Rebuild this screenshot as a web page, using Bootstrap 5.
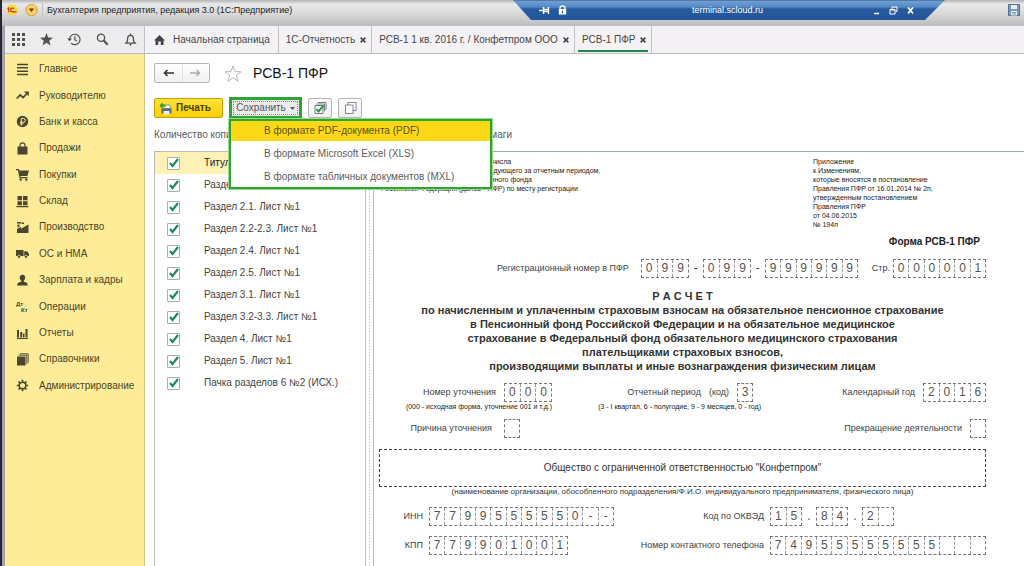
<!DOCTYPE html>
<html lang="ru">
<head>
<meta charset="utf-8">
<meta name="viewport" content="width=device-width, initial-scale=1">
<title>Бухгалтерия предприятия, редакция 3.0</title>
<link rel="stylesheet" href="https://cdn.jsdelivr.net/npm/bootstrap@5.3.0/dist/css/bootstrap.min.css">
<style>
  :root { --ink:#3f3f3f; --line:#b9bcc0; --green:#2fa52f; --gold:#fdd817; }
  body { font:10px/14px "Liberation Sans", Arial, sans-serif; color:var(--ink); background:#fff; }
  svg { display:block; flex:none; }
  button { font:inherit; color:inherit; }
  .app-frame { min-height:100vh; border-left:2px solid #2b2433; }
  .app-body { border-left:3px solid #a5a5a9; }

  /* window caption */
  .caption-bar { height:26px; padding:0 4px 6px 4px; background:linear-gradient(#b4b4b6 0,#e9e9ea 4px,#dcdcdd 12px,#bcbcbe 100%); color:#222; }
  .caption-title { font-size:9px; }
  .round-ico { width:12px; height:12px; overflow:visible; }
  .caption-sep { width:1px; height:16px; background:#c4c4c6; }
  .remote-bar { left:50%; right:79px; top:0; height:20px; padding:0 26px; color:#fff; font-size:9px;
    background:linear-gradient(#3c4f72 0,#6f9fd4 1px,#5688c4 7px,#275a9f 9px,#24559a 100%);
    clip-path:polygon(0 0,100% 0,calc(100% - 20px) 100%,18px 100%); }
  .remote-bar button { border:0; padding:0; background:none; color:#fff; }

  /* open pages */
  .tabs-bar { height:28px; background:#f5f2f6; border-bottom:1px solid #bdbdc0; }
  .quick-tools { width:140px; background:#ececee; border-right:1px solid #c2c2c6; }
  .quick-tools button { width:28px; border:0; padding:0; background:none; color:#505050; }
  .page-tab { padding:0 5px 0 7px; gap:5px; border-right:1px solid #c2c2c6; color:#464646; text-decoration:none; white-space:nowrap; position:relative; }
  .page-tab.home { padding:0 8px 0 9px; gap:8px; }
  .page-tab.current::after { content:""; position:absolute; left:3px; right:3px; bottom:1px; height:2px; background:#1d8752; }
  .page-tab button { border:0; padding:0; background:none; }

  /* sections */
  .sections { width:140px; padding-top:2px; background:#feec98; border-right:1px solid #cfc489; }
  .sections ul { display:grid; grid-auto-rows:1fr; height:343px; }
  .sections a { display:flex; align-items:center; gap:10px; height:100%; padding-left:11px; color:#4a4427; text-decoration:none; }
  .sections svg { width:13px; height:13px; color:#4a4630; }

  /* working area */
  .work { padding:9px 0 0 9px; min-width:0; }
  .flat-btn { height:20px; border:1px solid #b5b5b5; border-radius:2px; background:linear-gradient(#fff,#efefef); padding:0; }
  .nav-pair { width:56px; }
  .star { margin:0 11px 0 14px; }
  .page-title { font-size:14px; line-height:20px; color:#111; }
  .print-btn { width:69px; border-color:#c3a100; background:linear-gradient(#ffe23c,#f8cf00); color:#4c4200; }
  .commands { margin-top:15px; gap:6px; }
  .save-btn { width:73px; height:22px; margin:-1px 0; border:3px solid var(--green); border-radius:0; background:#ebebeb; outline:1px dotted #888; outline-offset:-5px; color:#555; }
  .tool-btn { width:24px; }
  .save-menu { left:0; top:21px; width:263px; padding:0; margin:0; border:2px solid var(--green); border-radius:0; font-size:10px; box-shadow:0 0 0 1px #9bdc94; }
  .save-menu ul { display:grid; gap:3px; }
  .save-menu .dropdown-item { padding:0 0 0 33px; height:20px; line-height:20px; color:#5c5c5c; }
  .save-menu .dropdown-item.active { background:var(--gold); color:#5c4f10; }
  .copies-line { margin:10px 0 9px; width:358px; color:#5a5a5a; }
  .parts { width:212px; border:1px solid var(--line); border-bottom:0; }
  .parts label { display:flex; align-items:center; gap:24px; height:22px; padding-left:12px; color:#444; }
  .parts label.chosen { background:#fdf1b5; color:#222; }
  .parts input { appearance:none; width:13px; height:13px; margin:0; border:1px solid #a9aeb0; border-radius:1px;
    background:#fff url("data:image/svg+xml,%3Csvg xmlns='http://www.w3.org/2000/svg' viewBox='0 0 11 11'%3E%3Cpath d='M2 5L4.500 8L10 1' fill='none' stroke='%231b8a5a' stroke-width='2.200'/%3E%3C/svg%3E") center/11px no-repeat; }
  .splitter { width:7px; background:repeating-linear-gradient(#b5b5b5 0 1px,transparent 1px 3px) center/1px 100% no-repeat; }

  /* printed form */
  .sheet { min-width:0; padding:5px 38px 8px 5px; border-left:1px solid var(--line); border-top:1px solid #9aa; }
  .fine { font-size:7px; line-height:9px; color:#222; white-space:nowrap; }
  .filing { padding-left:2px; }
  .annex { width:173px; }
  .form-name { font-weight:700; line-height:14px; color:#222; margin-top:6px; padding-right:6px; }
  .reg-line { margin-top:10px; }
  .form-lines { font-size:9px; line-height:19px; white-space:nowrap; }
  .page-label { margin:0 3px 0 14px; }
  .form-head { margin:11px 0 10px; font-size:11px; line-height:14px; font-weight:700; color:#333; text-align:center; }
  .cells { display:flex; flex:none; height:19px; border:1px dashed #777; font-size:12px; line-height:17px; color:#555; }
  .cells span { flex:1 1 0; text-align:center; }
  .cells span + span { border-left:1px dashed #999; }
  .n1 { width:16px; } .n2 { width:32px; } .n3 { width:48px; } .n4 { width:63px; }
  .n6 { width:93px; } .n9 { width:139px; } .n12 { width:185px; } .n14 { width:216px; }
  .dash { width:14px; text-align:center; font-size:12px; }
  .period-grid { display:grid; grid-template-columns:173fr 209fr 225fr; row-gap:8px; }
  .org-box { height:38px; margin-top:11px; border:1px dashed #444; color:#333; }
  .org-note { font-size:8px; line-height:10px; white-space:nowrap; color:#333; }
  .codes-grid { display:grid; grid-template-columns:44px 185px 1fr 216px; gap:10px 6px; margin-top:10px; }
</style>
<script src="https://cdn.jsdelivr.net/npm/bootstrap@5.3.0/dist/js/bootstrap.bundle.min.js"></script>
</head>
<body>
<div class="app-frame d-flex flex-column">
  <header class="caption-bar d-flex align-items-center position-relative">
    <svg class="round-ico" viewBox="0 0 12 12"><circle cx="6" cy="6" r="5.8" fill="#fbd84b"/><path d="M1.600 4.800l1.200-.9v4.300M8.200 4.600C6.600 3.300 4.600 4.300 4.600 5.900S6 8 7 7.900h3.600" fill="none" stroke="#c8321c" stroke-width="1.200"/></svg>
    <svg class="round-ico ms-2" viewBox="0 0 12 12"><circle cx="5.500" cy="6" r="5.600" fill="#fbd06c" stroke="#d99a34"/><path d="M2.800 4.600h5.400L5.500 8z" fill="#6a3c10"/></svg>
    <span class="caption-sep ms-1"></span>
    <span class="caption-title ms-1">Бухгалтерия предприятия, редакция 3.0 (1С:Предприятие)</span>
    <div class="remote-bar position-absolute d-flex align-items-center">
      <button aria-label="Закрепить"><svg width="11" height="9" viewBox="0 0 11 9" fill="none" stroke="#fff" stroke-width="1.400"><path d="M0 4.500h4M4.500 1v7M9.500 1v7M4.500 3.500h5M4.500 5.500h5"/></svg></button>
      <svg class="ms-2" width="9" height="10" viewBox="0 0 9 10"><path d="M2 4.500V3a2.500 2.200 0 0 1 5 0v1.500" fill="none" stroke="#fff" stroke-width="1.300"/><path d="M.8 4h7.400v5.600H.8z" fill="#fff"/><path d="M4.500 5.500v2.500" stroke="#2a5ca0" stroke-width="1.200"/></svg>
      <span class="mx-auto ps-5">terminal.scloud.ru</span>
      <span class="d-flex gap-2 ms-3 ps-3 pe-1">
        <button aria-label="Свернуть"><svg width="9" height="9" viewBox="0 0 9 9"><path d="M2 7.500h5" stroke="#fff" stroke-width="1.600"/></svg></button>
        <button aria-label="Восстановить"><svg width="9" height="9" viewBox="0 0 9 9" fill="none" stroke="#fff"><path d="M3 3V1h5v4.500H6.500M1 3.500h5V8H1zM1 4h5"/></svg></button>
        <button aria-label="Закрыть"><svg width="9" height="9" viewBox="0 0 9 9"><path d="M2 1.500l5 6M7 1.500l-5 6" stroke="#fff" stroke-width="1.700"/></svg></button>
      </span>
    </div>
    <svg class="ms-auto" width="12" height="12" viewBox="0 0 12 12"><path d="M.5.500h11v11h-11z" fill="#7d97b5" stroke="#56708f"/><path d="M3 1h6v4H3zM3 7h6v4.500H3z" fill="#e6edf4"/><path d="M4 8.500h4M4 10h4" stroke="#56708f" stroke-width=".7"/></svg>
  </header>

  <div class="app-body flex-grow-1 d-flex flex-column">
    <nav class="tabs-bar d-flex">
      <div class="quick-tools d-flex flex-shrink-0">
        <button class="d-flex align-items-center justify-content-center" aria-label="Меню"><svg width="13" height="13" viewBox="0 0 13 13" fill="currentColor"><path d="M0 0h3v3H0zM5 0h3v3H5zM10 0h3v3h-3zM0 5h3v3H0zM5 5h3v3H5zM10 5h3v3h-3zM0 10h3v3H0zM5 10h3v3H5zM10 10h3v3h-3z"/></svg></button>
        <button class="d-flex align-items-center justify-content-center" aria-label="Избранное"><svg width="13" height="13" viewBox="0 0 13 13" fill="currentColor"><path d="M6.500 0l1.700 4.500 4.800.2-3.800 3 1.300 4.700-4-2.700-4 2.700 1.300-4.700L0 4.700l4.800-.2z"/></svg></button>
        <button class="d-flex align-items-center justify-content-center" aria-label="История"><svg width="14" height="13" viewBox="0 0 14 13" fill="none" stroke="currentColor" stroke-width="1.200"><path d="M2.600 6.500a5.200 5.200 0 1 1 1.600 3.700M7.800 3.300v3.400l2.200 1.300"/><path d="M.2 5.500h4.800L2.600 8.300z" fill="currentColor" stroke="none"/></svg></button>
        <button class="d-flex align-items-center justify-content-center" aria-label="Поиск"><svg width="13" height="13" viewBox="0 0 13 13" fill="none" stroke="currentColor"><circle cx="5" cy="4.800" r="3.600" stroke-width="1.300"/><path d="M7.700 7.500l4 4.200" stroke-width="2.200"/></svg></button>
        <button class="d-flex align-items-center justify-content-center" aria-label="Оповещения"><svg width="13" height="13" viewBox="0 0 13 13" fill="none" stroke="currentColor" stroke-width="1.300"><path d="M.8 10.200h11.400M2.300 10c1.400-1.300 1.200-3 1.400-5 .2-3.600 5.400-3.600 5.600 0 .2 2 0 3.700 1.400 5M6.500 2.400V.4"/><path d="M5 11h3l-1.500 1.700z" fill="currentColor" stroke="none"/></svg></button>
      </div>
      <a class="page-tab home d-flex align-items-center" href="#"><svg width="11" height="10" viewBox="0 0 11 10" fill="#444"><path d="M5.500 0L11 5.400H9.500V10H6.800V6.500H4.200V10H1.500V5.400H0z"/></svg>Начальная страница</a>
      <div class="page-tab d-flex align-items-center">1С-Отчетность<button aria-label="Закрыть вкладку"><svg width="6" height="6" viewBox="0 0 6 6"><path d="M.6.6l4.800 4.800M5.400.6L.6 5.400" stroke="#444" stroke-width="1.500"/></svg></button></div>
      <div class="page-tab d-flex align-items-center">РСВ-1 1 кв. 2016 г. / Конфетпром ООО<button aria-label="Закрыть вкладку"><svg width="6" height="6" viewBox="0 0 6 6"><path d="M.6.6l4.800 4.800M5.400.6L.6 5.400" stroke="#444" stroke-width="1.500"/></svg></button></div>
      <div class="page-tab current d-flex align-items-center">РСВ-1 ПФР<button aria-label="Закрыть вкладку"><svg width="6" height="6" viewBox="0 0 6 6"><path d="M.6.6l4.800 4.800M5.400.6L.6 5.400" stroke="#444" stroke-width="1.500"/></svg></button></div>
    </nav>

    <div class="d-flex flex-grow-1">
      <aside class="sections flex-shrink-0">
        <ul class="list-unstyled m-0">
          <li><a href="#"><svg viewBox="0 0 13 13"><path d="M1 1.500h11M1 4.800h11M1 8.200h11M1 11.500h11" stroke="currentColor" stroke-width="1.500"/></svg>Главное</a></li>
          <li><a href="#"><svg viewBox="0 0 13 13"><path d="M.7 9.500l3.500-3.500 3 2.500 3.800-4" fill="none" stroke="currentColor" stroke-width="1.700"/><path d="M8 2.500h4.800v4.800z" fill="currentColor"/></svg>Руководителю</a></li>
          <li><a href="#"><svg viewBox="0 0 13 13"><circle cx="6.500" cy="6.500" r="5.700" fill="currentColor"/><path d="M5.300 10.500V3.400h2.200a1.900 1.900 0 0 1 0 3.800H4M4 8.800h3.500" fill="none" stroke="#feec98"/></svg>Банк и касса</a></li>
          <li><a href="#"><svg viewBox="0 0 13 13"><path d="M1.500 4.500h10v8h-10z" fill="currentColor"/><path d="M4 6V3.400c0-3.400 5-3.400 5 0V6" fill="none" stroke="currentColor" stroke-width="1.100"/></svg>Продажи</a></li>
          <li><a href="#"><svg viewBox="0 0 13 13" fill="currentColor"><path d="M0 1h2.800l.5 1.500H13l-1.600 5.500H4.300l.2 1h7v1.200h-8L1.900 2.200H0z"/><circle cx="4.700" cy="11.600" r="1.200"/><circle cx="10.300" cy="11.600" r="1.200"/></svg>Покупки</a></li>
          <li><a href="#"><svg viewBox="0 0 13 13" fill="currentColor"><path d="M1.500 1h4.500v4.200H1.500zM7 1h4.500v4.200H7zM1.500 6.200h4.500v4H1.500zM7 6.200h4.500v4H7zM.5 11h12v1.300H.5z"/></svg>Склад</a></li>
          <li><a href="#"><svg viewBox="0 0 13 13" fill="currentColor"><path d="M1 12V8l4-2.300v2L9 5.500l3.500-2V12zM1.500 6.500V3.500h2V5.500zM1 1h4v1.500H1zM5.500 1.500h2.500v1.500H5.500z"/></svg>Производство</a></li>
          <li><a href="#"><svg viewBox="0 0 13 13"><path d="M0 3h7.600v6H0zM8.200 4.300h2.800l2 2.400V9H8.200z" fill="currentColor"/><circle cx="3" cy="9.700" r="1.500" fill="currentColor" stroke="#feec98" stroke-width=".6"/><circle cx="10" cy="9.700" r="1.500" fill="currentColor" stroke="#feec98" stroke-width=".6"/></svg>ОС и НМА</a></li>
          <li><a href="#"><svg viewBox="0 0 13 13" fill="currentColor"><path d="M6.500.8c3.600 0 3.200 4.500 1.300 6v1c1.800.3 4 .8 4 3.800H1.200c0-3 2.200-3.500 4-3.800v-1C3.300 5.300 2.900.8 6.500.8z"/></svg>Зарплата и кадры</a></li>
          <li><a href="#"><svg viewBox="0 0 13 13" fill="currentColor" font-size="6" font-weight="bold"><text x="0" y="6">Дт</text><text x="5" y="12">Кт</text></svg>Операции</a></li>
          <li><a href="#"><svg viewBox="0 0 13 13" fill="currentColor"><path d="M1 3h2v7.500H1zM4.200 5h2v5.500h-2zM7 6.500h1.500v4H7zM9.500 2h2v8.500h-2zM1 11h11v1H1z"/></svg>Отчеты</a></li>
          <li><a href="#"><svg viewBox="0 0 13 13"><path d="M1 3.500h8.500v9H1z" fill="currentColor"/><path d="M2.500 2.200h8.300v9M4 .8h8.200v8.700" fill="none" stroke="currentColor" stroke-width=".9"/></svg>Справочники</a></li>
          <li><a href="#"><svg viewBox="0 0 13 13" fill="none" stroke="currentColor"><circle cx="6.500" cy="6.500" r="3.300" stroke-width="1.600"/><path d="M6.500.8v2M6.500 10.200v2M.8 6.500h2M10.200 6.500h2M2.500 2.500l1.400 1.400M9.100 9.100l1.400 1.400M2.500 10.500l1.400-1.400M9.100 3.900l1.400-1.400" stroke-width="1.700"/></svg>Администрирование</a></li>
        </ul>
      </aside>

      <main class="work flex-grow-1 d-flex flex-column">
        <div class="d-flex align-items-center">
          <div class="nav-pair flat-btn d-flex">
            <button class="btn p-0 border-0 flex-fill d-flex align-items-center justify-content-center" aria-label="Назад"><svg width="11" height="8" viewBox="0 0 11 8" fill="none" stroke="#333" stroke-width="1.600"><path d="M11 4H1.500M4.500 1L1.500 4l3 3"/></svg></button>
            <button class="btn p-0 border-0 border-start rounded-0 flex-fill d-flex align-items-center justify-content-center" aria-label="Вперед"><svg width="11" height="8" viewBox="0 0 11 8" fill="none" stroke="#aaa" stroke-width="1.400"><path d="M0 4h9.500M6.500 1l3 3-3 3"/></svg></button>
          </div>
          <svg class="star" width="18" height="17" viewBox="0 0 18 17" fill="#fff" stroke="#b3b7bd"><path d="M9 1l2.100 5.600 6 .2-4.700 3.700 1.700 5.700L9 12.800l-5.100 3.400 1.700-5.700L.9 6.800l6-.2z"/></svg>
          <h1 class="page-title m-0 fw-normal">РСВ-1 ПФР</h1>
        </div>

        <div class="commands d-flex">
          <button class="flat-btn print-btn fw-bold d-flex align-items-center"><svg class="ms-1 me-1" width="13" height="13" viewBox="0 0 13 13"><path d="M4.500 3h6l1.300 3.500H4z" fill="#fff" stroke="#666" stroke-width=".7"/><path d="M2.500 6.500h10v5h-10z" fill="#5e6b78"/><path d="M4.500 9h6v3.400h-6z" fill="#e8edf2"/><path d="M.3 3.700L3.500.3v2c2.300 0 3.500 1 3.500 3-.8-.7-2-.9-3.500-.8v2.500z" fill="#33a02c"/></svg>Печать</button>
          <div class="dropdown">
            <button class="flat-btn save-btn d-flex align-items-center justify-content-center gap-1" aria-expanded="true">Сохранить<svg width="5" height="3" viewBox="0 0 5 3"><path d="M0 0h5L2.500 3z" fill="#555"/></svg></button>
            <div class="dropdown-menu save-menu show">
              <ul class="list-unstyled m-0">
                <li><a class="dropdown-item active" href="#">В формате PDF-документа (PDF)</a></li>
                <li><a class="dropdown-item" href="#">В формате Microsoft Excel (XLS)</a></li>
                <li><a class="dropdown-item" href="#">В формате табличных документов (MXL)</a></li>
              </ul>
            </div>
          </div>
          <button class="flat-btn tool-btn d-flex align-items-center justify-content-center" aria-label="Отметить все"><svg width="13" height="12" viewBox="0 0 13 12" fill="#fff" stroke="#667" stroke-width=".9"><path d="M4 .5h8v7.500M2.500 2h8v7.500"/><path d="M1 3.500h8v8H1z"/><path d="M2.500 7l2 2.500L9.500 3.500" fill="none" stroke="#23963f" stroke-width="2"/></svg></button>
          <button class="flat-btn tool-btn d-flex align-items-center justify-content-center" aria-label="Снять отметки"><svg width="13" height="12" viewBox="0 0 13 12" fill="#fff" stroke="#778" stroke-width=".9"><path d="M4 .5h8v8h-3M4 .5v3"/><path d="M1.500 3h7.500v8.500H1.500z"/></svg></button>
        </div>

        <div class="copies-line d-flex justify-content-between"><span>Количество копий:</span><span>бумаги</span></div>

        <div class="d-flex flex-grow-1">
          <form class="parts flex-shrink-0">
            <label class="chosen"><input type="checkbox" checked>Титульный лист</label>
            <label><input type="checkbox" checked>Раздел 1. Лист №1</label>
            <label><input type="checkbox" checked>Раздел 2.1. Лист №1</label>
            <label><input type="checkbox" checked>Раздел 2.2-2.3. Лист №1</label>
            <label><input type="checkbox" checked>Раздел 2.4. Лист №1</label>
            <label><input type="checkbox" checked>Раздел 2.5. Лист №1</label>
            <label><input type="checkbox" checked>Раздел 3.1. Лист №1</label>
            <label><input type="checkbox" checked>Раздел 3.2-3.3. Лист №1</label>
            <label><input type="checkbox" checked>Раздел 4. Лист №1</label>
            <label><input type="checkbox" checked>Раздел 5. Лист №1</label>
            <label><input type="checkbox" checked>Пачка разделов 6 №2 (ИСХ.)</label>
          </form>
          <div class="splitter flex-shrink-0"></div>

          <article class="sheet flex-grow-1">
            <div class="fine d-flex justify-content-between">
              <div class="filing">Представляется не позднее 15-го числа<br>второго календарного месяца, следующего за отчетным периодом,<br>в территориальный орган Пенсионного фонда<br>Российской Федерации (далее - ПФР) по месту регистрации</div>
              <div class="annex">Приложение<br>к Изменениям,<br>которые вносятся в постановление<br>Правления ПФР от 16.01.2014 № 2п,<br>утвержденным постановлением<br>Правления ПФР<br>от 04.06.2015<br>№ 194п</div>
            </div>
            <div class="form-name text-end">Форма РСВ-1 ПФР</div>
            <div class="form-lines reg-line d-flex justify-content-end">
              <span class="me-2">Регистрационный номер в ПФР</span>
              <span class="cells n3 ms-1"><span>0</span><span>9</span><span>9</span></span><span class="dash">-</span>
              <span class="cells n3"><span>0</span><span>9</span><span>9</span></span><span class="dash">-</span>
              <span class="cells n6"><span>9</span><span>9</span><span>9</span><span>9</span><span>9</span><span>9</span></span>
              <span class="page-label">Стр.</span>
              <span class="cells n6"><span>0</span><span>0</span><span>0</span><span>0</span><span>0</span><span>1</span></span>
            </div>

            <h2 class="form-head">Р А С Ч Е Т<br>по начисленным и уплаченным страховым взносам на обязательное пенсионное страхование<br>в Пенсионный фонд Российской Федерации и на обязательное медицинское<br>страхование в Федеральный фонд обязательного медицинского страхования<br>плательщиками страховых взносов,<br>производящими выплаты и иные вознаграждения физическим лицам</h2>

            <div class="period-grid form-lines">
              <div>
                <div class="d-flex justify-content-end"><span class="me-2">Номер уточнения</span><span class="cells n3"><span>0</span><span>0</span><span>0</span></span></div>
                <div class="fine text-end">(000 - исходная форма, уточнение 001 и т.д.)</div>
              </div>
              <div>
                <div class="d-flex justify-content-end pe-2"><span>Отчетный период</span><span class="mx-2">(код)</span><span class="cells n1"><span>3</span></span></div>
                <div class="fine text-end">(3 - I квартал, 6 - полугодие, 9 - 9 месяцев, 0 - год)</div>
              </div>
              <div class="d-flex justify-content-end"><span class="me-2">Календарный год</span><span class="cells n4"><span>2</span><span>0</span><span>1</span><span>6</span></span></div>
              <div class="d-flex justify-content-end"><span class="me-2 pe-1">Причина уточнения</span><span class="n3"><span class="cells n1"><span></span></span></span></div>
              <div></div>
              <div class="d-flex justify-content-end"><span class="me-2">Прекращение деятельности</span><span class="cells n1"><span></span></span></div>
            </div>

            <div class="org-box d-flex align-items-center justify-content-center">Общество с ограниченной ответственностью "Конфетпром"</div>
            <div class="org-note text-center">(наименование организации, обособленного подразделения/Ф.И.О. индивидуального предпринимателя, физического лица)</div>

            <div class="codes-grid form-lines">
              <span class="text-end">ИНН</span>
              <span class="cells n12"><span>7</span><span>7</span><span>9</span><span>9</span><span>5</span><span>5</span><span>5</span><span>5</span><span>5</span><span>0</span><span>-</span><span>-</span></span>
              <span class="text-end">Код по ОКВЭД</span>
              <span class="d-flex"><span class="cells n2"><span>1</span><span>5</span></span><span class="dash">.</span><span class="cells n2"><span>8</span><span>4</span></span><span class="dash">.</span><span class="cells n2"><span>2</span><span></span></span></span>
              <span class="text-end">КПП</span>
              <span class="cells n9"><span>7</span><span>7</span><span>9</span><span>9</span><span>0</span><span>1</span><span>0</span><span>0</span><span>1</span></span>
              <span class="text-end">Номер контактного телефона</span>
              <span class="cells n14"><span>7</span><span>4</span><span>9</span><span>5</span><span>5</span><span>5</span><span>5</span><span>5</span><span>5</span><span>5</span><span>5</span><span></span><span></span><span></span></span>
            </div>
          </article>
        </div>
      </main>
    </div>
  </div>
</div>
</body>
</html>
